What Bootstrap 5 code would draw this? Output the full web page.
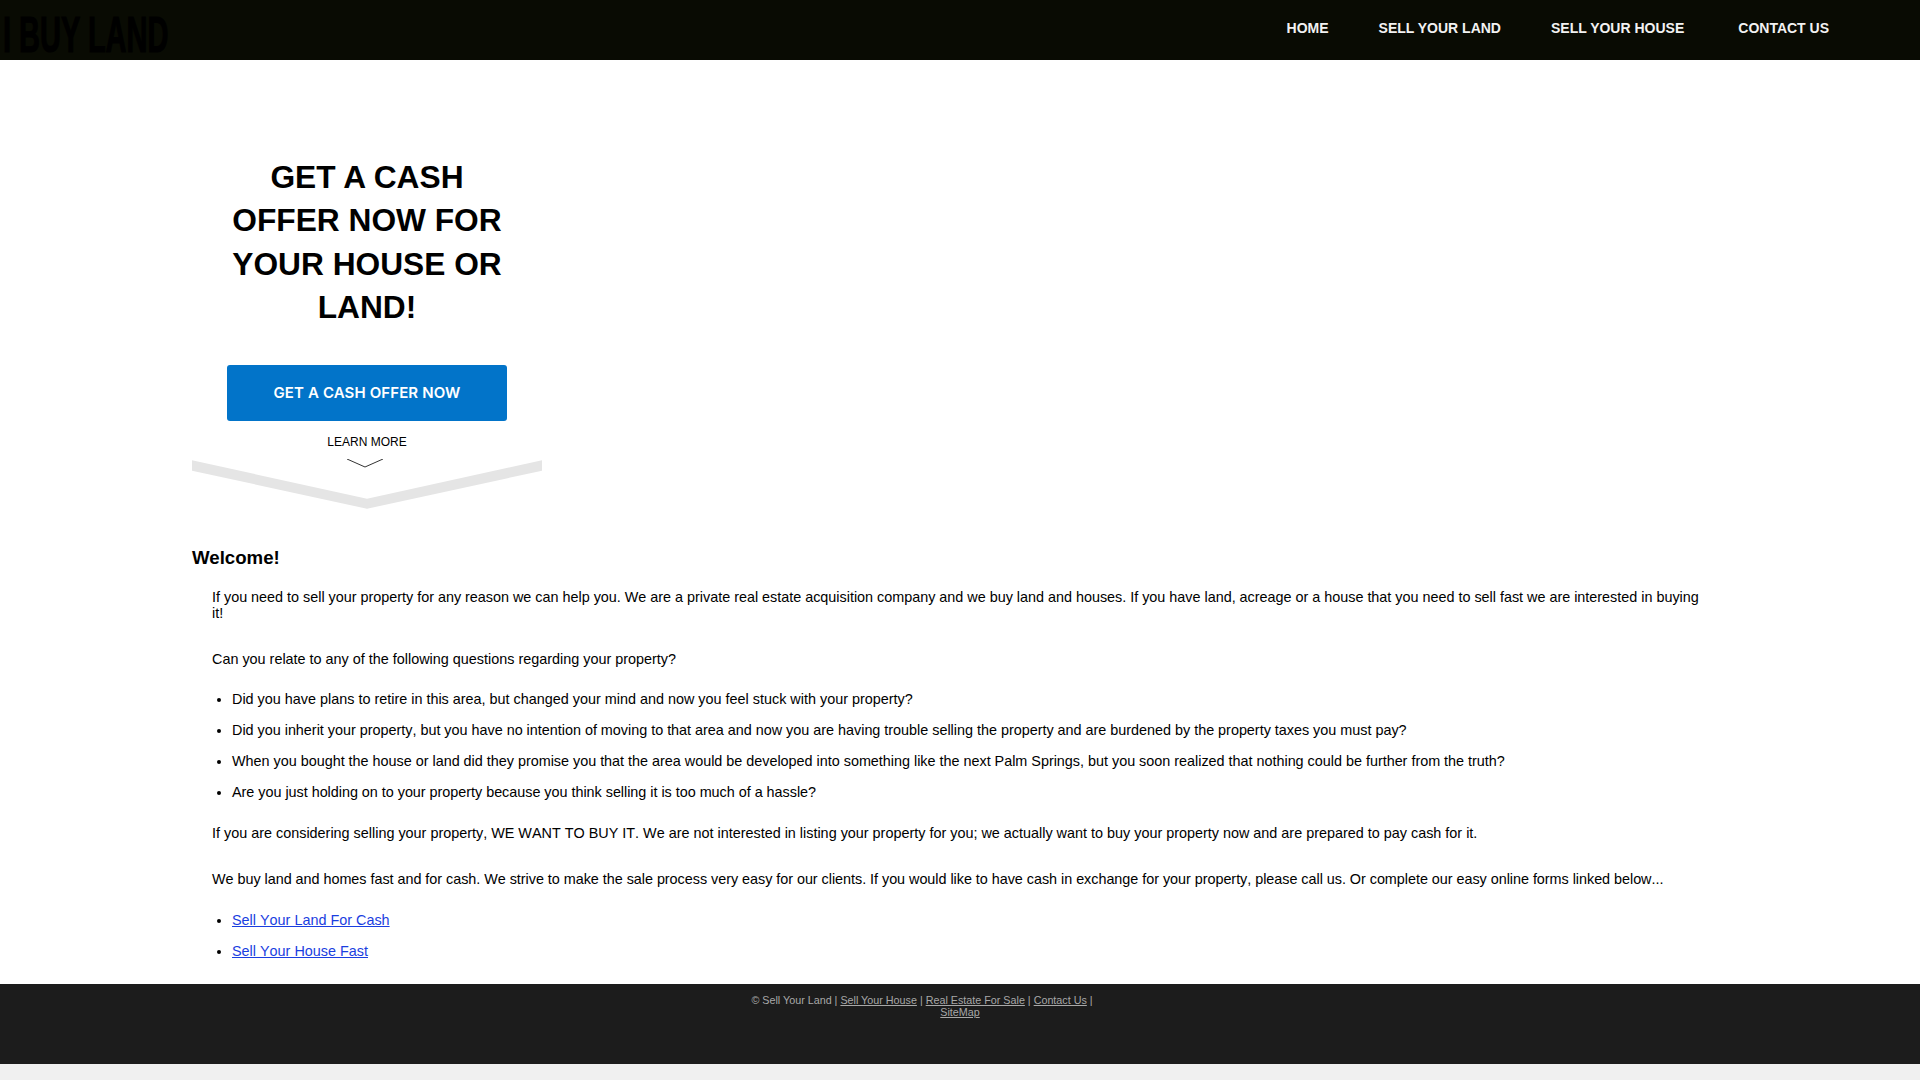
<!DOCTYPE html>
<html lang="en">
<head>
<meta charset="utf-8">
<title>I Buy Land</title>
<link rel="stylesheet" href="https://cdn.jsdelivr.net/npm/bootstrap@5.3.0/dist/css/bootstrap.min.css">
<style>
body{background:#f0f0f0;font-family:"Liberation Sans",Arial,sans-serif;font-size:14.4px;line-height:16px;color:#000;}
.topbar{background:#090b03;height:60px;}
.logo-text{font-family:"Liberation Sans",sans-serif;font-weight:700;font-size:50px;line-height:38px;height:38px;color:#000;display:block;transform:scaleX(.58);transform-origin:left top;white-space:nowrap;margin:16px 0 0 3px;-webkit-text-stroke:1px #000;}
.top-link{color:#f2f2f2;font-size:14px;font-weight:700;text-transform:uppercase;text-decoration:none;line-height:16px;white-space:nowrap;}
.top-menu{margin-top:20px;padding-right:91px;}
.top-gap{margin-left:50px;}
.top-gap-wide{margin-left:54px;}
.page-main{background:#fff;height:924px;padding:0 192px;}
.hero-box{width:350px;padding-top:96px;}
.hero-title{font-family:"Liberation Sans",sans-serif;font-size:31.7px;font-weight:700;line-height:43.4px;margin:0;text-align:center;padding:0 30px;}
.cash-btn{display:block;width:280px;height:56px;margin:35px auto 0;background:#0274c9;color:#fff;border:0;border-radius:3px;font-family:Inter,sans-serif;font-weight:600;font-size:15px;letter-spacing:.12px;line-height:56px;text-align:center;text-decoration:none;padding:0;}
.learn-more{font-size:12px;line-height:14px;text-align:center;margin-top:14px;}
.learn-svg{display:block;width:350px;height:56px;margin-top:10px;}
.welcome-title{font-family:"Liberation Sans",sans-serif;font-size:18.67px;font-weight:700;line-height:22px;margin:32px 0 0;}
.body-copy{padding:0 20px;margin-top:20px;font-kerning:none;}
.body-copy p{margin:0 0 30px;}
.body-copy p + ul{margin-top:-6px;}
.body-copy .link-list{margin-top:-5px;}
.body-copy ul{margin-bottom:25px;padding-left:20px;}
.body-copy li{margin-bottom:15px;}
.body-copy li:last-child{margin-bottom:0;}
.body-copy a{color:#1a3ee0;}
.tight-1{letter-spacing:-.012px;}
.tight-2{letter-spacing:-.025px;}
.tight-3{letter-spacing:-.033px;}
.foot-bar{background:#1c1c1c;height:80px;color:#a8a8a8;font-size:10.76px;line-height:12px;text-align:center;padding-top:10px;}
.foot-bar a{color:#a8a8a8;}
.foot-spacer{display:inline-block;width:73px;height:1px;}
.foot-tail{height:16px;}
</style>
</head>
<body>
<header class="topbar d-flex justify-content-between">
  <a class="text-decoration-none" href="#"><span class="logo-text">I BUY LAND</span></a>
  <nav class="top-menu d-flex">
    <a class="top-link" href="#">Home</a>
    <a class="top-link top-gap" href="#">Sell Your Land</a>
    <a class="top-link top-gap" href="#">Sell Your House</a>
    <a class="top-link top-gap-wide" href="#">Contact Us</a>
  </nav>
</header>
<main class="page-main">
  <section class="hero-box">
    <h1 class="hero-title">GET A CASH OFFER NOW FOR YOUR HOUSE OR LAND!</h1>
    <a class="cash-btn" href="#">GET A CASH OFFER NOW</a>
    <div class="learn-more">LEARN MORE</div>
    <svg class="learn-svg" viewBox="0 0 350 56" aria-hidden="true">
      <polygon points="0,1.3 175,39.7 350,1.3 350,11.7 175,49.7 0,11.7" fill="#e5e5e5"/>
      <polyline points="155,0 173,8 191,0" fill="none" stroke="#333" stroke-width="1"/>
    </svg>
  </section>
  <h2 class="welcome-title">Welcome!</h2>
  <div class="body-copy">
    <p class="tight-1">If you need to sell your property for any reason we can help you. We are a private real estate acquisition company and we buy land and houses. If you have land, acreage or a house that you need to sell fast we are interested in buying it!</p>
    <p>Can you relate to any of the following questions regarding your property?</p>
    <ul>
      <li>Did you have plans to retire in this area, but changed your mind and now you feel stuck with your property?</li>
      <li class="tight-1">Did you inherit your property, but you have no intention of moving to that area and now you are having trouble selling the property and are burdened by the property taxes you must pay?</li>
      <li class="tight-1">When you bought the house or land did they promise you that the area would be developed into something like the next Palm Springs, but you soon realized that nothing could be further from the truth?</li>
      <li class="tight-2">Are you just holding on to your property because you think selling it is too much of a hassle?</li>
    </ul>
    <p>If you are considering selling your property, WE WANT TO BUY IT. We are not interested in listing your property for you; we actually want to buy your property now and are prepared to pay cash for it.</p>
    <p class="tight-3">We buy land and homes fast and for cash. We strive to make the sale process very easy for our clients. If you would like to have cash in exchange for your property, please call us. Or complete our easy online forms linked below...</p>
    <ul class="link-list">
      <li><a href="#">Sell Your Land For Cash</a></li>
      <li><a href="#">Sell Your House Fast</a></li>
    </ul>
  </div>
</main>
<footer class="foot-bar">
  <div>© Sell Your Land | <a href="#">Sell Your House</a> | <a href="#">Real Estate For Sale</a> | <a href="#">Contact Us</a> | <span class="foot-spacer"></span><br><a href="#">SiteMap</a></div>
</footer>
<div class="foot-tail"></div>
<script src="https://cdn.jsdelivr.net/npm/bootstrap@5.3.0/dist/js/bootstrap.bundle.min.js"></script>
</body>
</html>
